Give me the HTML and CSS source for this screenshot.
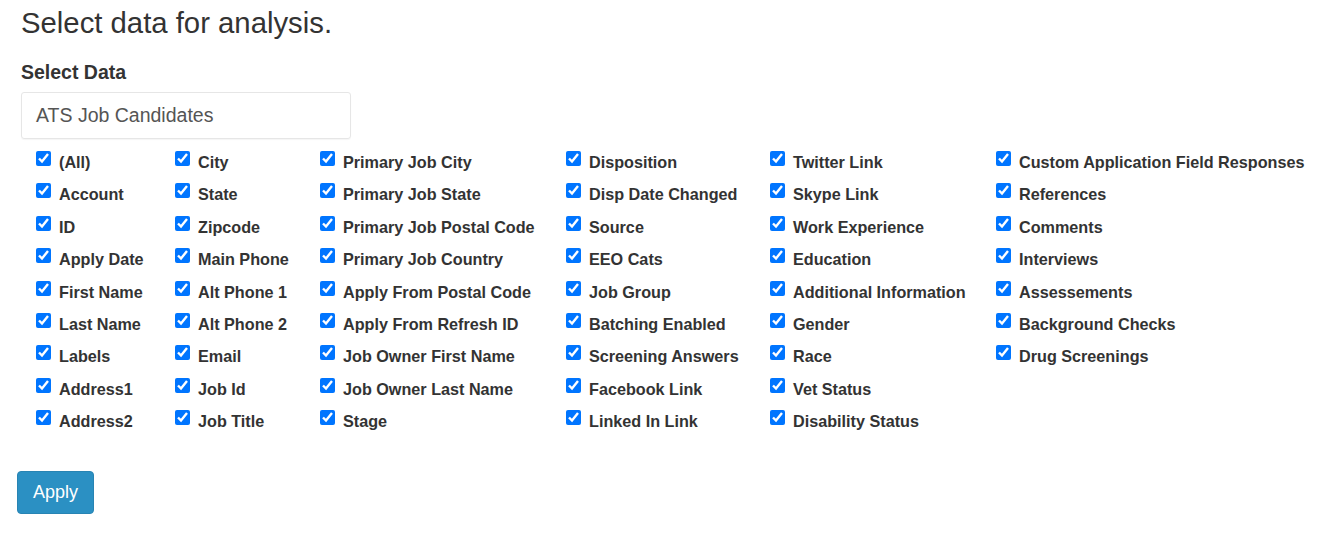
FILE: index.html
```html
<!DOCTYPE html>
<html lang="en">
<head>
    <meta charset="UTF-8">
    <meta name="viewport" content="width=device-width, initial-scale=1.0">
    <title>Select data for analysis</title>
    <link rel="stylesheet" href="styles.css">
</head>
<body>
    <div class="page">
        <h1 class="page-title">Select data for analysis.</h1>

        <!-- Data source -->
        <div class="form-group">
            <label class="group-label">Select Data</label>
            <div class="source-box">ATS Job Candidates</div>
        </div>

        <!-- Field list -->
        <div class="field-grid">
            <label class="field"><input type="checkbox" checked><span>(All)</span></label>
            <label class="field"><input type="checkbox" checked><span>Account</span></label>
            <label class="field"><input type="checkbox" checked><span>ID</span></label>
            <label class="field"><input type="checkbox" checked><span>Apply Date</span></label>
            <label class="field"><input type="checkbox" checked><span>First Name</span></label>
            <label class="field"><input type="checkbox" checked><span>Last Name</span></label>
            <label class="field"><input type="checkbox" checked><span>Labels</span></label>
            <label class="field"><input type="checkbox" checked><span>Address1</span></label>
            <label class="field"><input type="checkbox" checked><span>Address2</span></label>

            <label class="field"><input type="checkbox" checked><span>City</span></label>
            <label class="field"><input type="checkbox" checked><span>State</span></label>
            <label class="field"><input type="checkbox" checked><span>Zipcode</span></label>
            <label class="field"><input type="checkbox" checked><span>Main Phone</span></label>
            <label class="field"><input type="checkbox" checked><span>Alt Phone 1</span></label>
            <label class="field"><input type="checkbox" checked><span>Alt Phone 2</span></label>
            <label class="field"><input type="checkbox" checked><span>Email</span></label>
            <label class="field"><input type="checkbox" checked><span>Job Id</span></label>
            <label class="field"><input type="checkbox" checked><span>Job Title</span></label>

            <label class="field"><input type="checkbox" checked><span>Primary Job City</span></label>
            <label class="field"><input type="checkbox" checked><span>Primary Job State</span></label>
            <label class="field"><input type="checkbox" checked><span>Primary Job Postal Code</span></label>
            <label class="field"><input type="checkbox" checked><span>Primary Job Country</span></label>
            <label class="field"><input type="checkbox" checked><span>Apply From Postal Code</span></label>
            <label class="field"><input type="checkbox" checked><span>Apply From Refresh ID</span></label>
            <label class="field"><input type="checkbox" checked><span>Job Owner First Name</span></label>
            <label class="field"><input type="checkbox" checked><span>Job Owner Last Name</span></label>
            <label class="field"><input type="checkbox" checked><span>Stage</span></label>

            <label class="field"><input type="checkbox" checked><span>Disposition</span></label>
            <label class="field"><input type="checkbox" checked><span>Disp Date Changed</span></label>
            <label class="field"><input type="checkbox" checked><span>Source</span></label>
            <label class="field"><input type="checkbox" checked><span>EEO Cats</span></label>
            <label class="field"><input type="checkbox" checked><span>Job Group</span></label>
            <label class="field"><input type="checkbox" checked><span>Batching Enabled</span></label>
            <label class="field"><input type="checkbox" checked><span>Screening Answers</span></label>
            <label class="field"><input type="checkbox" checked><span>Facebook Link</span></label>
            <label class="field"><input type="checkbox" checked><span>Linked In Link</span></label>

            <label class="field"><input type="checkbox" checked><span>Twitter Link</span></label>
            <label class="field"><input type="checkbox" checked><span>Skype Link</span></label>
            <label class="field"><input type="checkbox" checked><span>Work Experience</span></label>
            <label class="field"><input type="checkbox" checked><span>Education</span></label>
            <label class="field"><input type="checkbox" checked><span>Additional Information</span></label>
            <label class="field"><input type="checkbox" checked><span>Gender</span></label>
            <label class="field"><input type="checkbox" checked><span>Race</span></label>
            <label class="field"><input type="checkbox" checked><span>Vet Status</span></label>
            <label class="field"><input type="checkbox" checked><span>Disability Status</span></label>

            <label class="field"><input type="checkbox" checked><span>Custom Application Field Responses</span></label>
            <label class="field"><input type="checkbox" checked><span>References</span></label>
            <label class="field"><input type="checkbox" checked><span>Comments</span></label>
            <label class="field"><input type="checkbox" checked><span>Interviews</span></label>
            <label class="field"><input type="checkbox" checked><span>Assessements</span></label>
            <label class="field"><input type="checkbox" checked><span>Background Checks</span></label>
            <label class="field"><input type="checkbox" checked><span>Drug Screenings</span></label>
        </div>

        <div class="form-actions">
            <button class="primary-btn">Apply</button>
        </div>
    </div>
</body>
</html>
```

FILE: styles.css
```css
:root {
    --text: #333;
    --muted: #555;
    --primary: #2b90c3;
    --border: #e6e6e6;
}

/* Base Styles */
body {
    margin: 0;
    font-family: "Liberation Sans", Arial, sans-serif;
    color: var(--text);
    background: #fff;
}

.page {
    padding: 7px 17px 0;
}

.page-title {
    margin: 0 0 0 4px;
    font-size: 29.3px;
    line-height: 32px;
    font-weight: normal;
}

/* Data Source */
.form-group {
    margin: 21px 0 0 4px;
}

.group-label {
    display: block;
    font-size: 19.5px;
    line-height: 24px;
    font-weight: bold;
}

.source-box {
    box-sizing: border-box;
    width: 330px;
    height: 47px;
    margin-top: 8px;
    padding: 0 14px;
    border: 1px solid var(--border);
    border-radius: 3px;
    box-shadow: 0 1px 1px rgba(0,0,0,0.04);
    font-size: 19.5px;
    line-height: 45px;
    color: var(--muted);
}

/* Field Checkboxes */
.field-grid {
    display: grid;
    grid-auto-flow: column;
    grid-template-rows: repeat(9, 32.4px);
    grid-template-columns: 139px 145px 246px 204px 226px auto;
    margin: 7px 0 0 19px;
}

.field {
    display: flex;
    align-items: flex-start;
    font-size: 16.2px;
    line-height: 32.4px;
    font-weight: bold;
    white-space: nowrap;
}

.field input {
    width: 15px;
    height: 15px;
    margin: 5px 8px 0 0;
    accent-color: #0075ff;
}

/* Actions */
.form-actions {
    margin-top: 33px;
}

.primary-btn {
    height: 43px;
    padding: 0 15px;
    border: 1px solid #2884b3;
    border-radius: 4px;
    background: var(--primary);
    color: #fff;
    font-family: inherit;
    font-size: 18px;
    line-height: 41px;
}
```
